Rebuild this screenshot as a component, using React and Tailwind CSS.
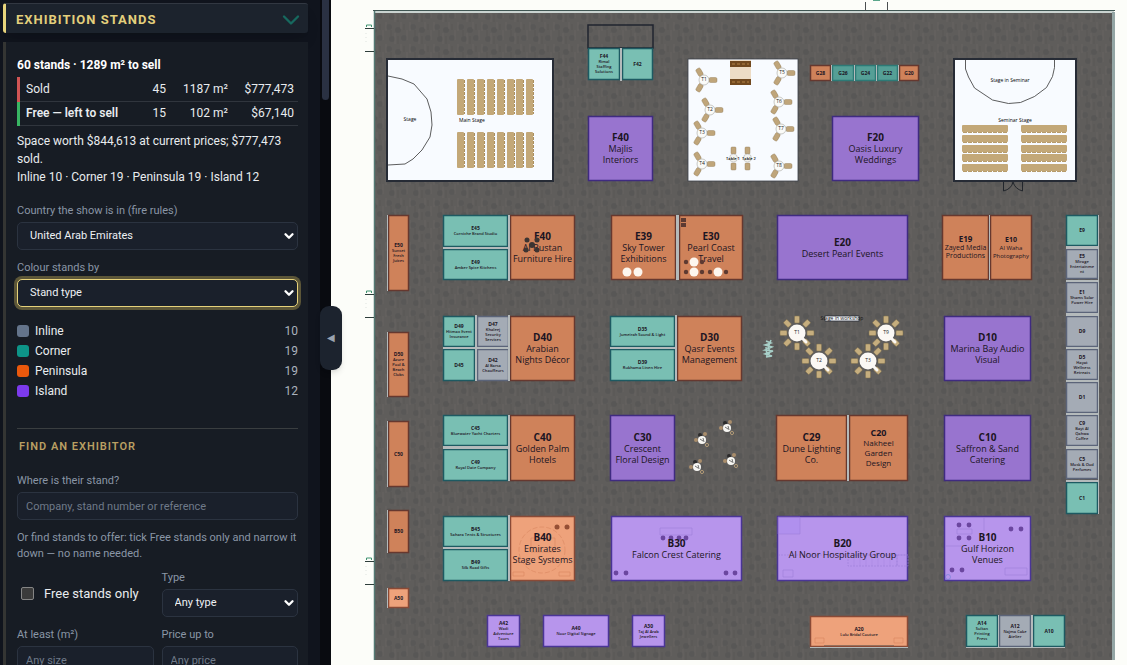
import React, { useState } from 'react';
import { ChevronDown } from 'lucide-react';

const TYPES = [
  { name: 'Inline', count: 10, swatch: 'bg-[#64748b]' },
  { name: 'Corner', count: 19, swatch: 'bg-[#0d9488]' },
  { name: 'Peninsula', count: 19, swatch: 'bg-[#ea580c]' },
  { name: 'Island', count: 12, swatch: 'bg-[#7c3aed]' },
];

// fill and outline of a stand, the "Free" ones are the lighter shades
const PAINT = {
  corner: ['#79bfb3', '#1d5a62'],
  cornerDark: ['#559f96', '#2d7a76'],
  inline: ['#a4abb5', '#5b6479'],
  pen: ['#cf825a', '#66382f'],
  penFree: ['#eea27b', '#8a4a36'],
  island: ['#9874cf', '#3f2b80'],
  islandFree: ['#b795ec', '#4a3596'],
};

// id, paint, x, y, width, height, exhibitor lines, label size
const STANDS = [
  ['F44', 'corner', 588, 48, 32, 32, ['Rimal', 'Staffing', 'Solutions'], 's'],
  ['F42', 'corner', 622, 48, 31, 32, [], 's'],
  ['F40', 'island', 588, 116, 65, 65, ['Majlis', 'Interiors'], 'l'],
  ['F20', 'island', 832, 116, 87, 65, ['Oasis Luxury', 'Weddings'], 'l'],
  ['G28', 'pen', 810, 65, 21, 16, [], 's'],
  ['G26', 'cornerDark', 832, 65, 22, 16, [], 's'],
  ['G24', 'cornerDark', 855, 65, 21, 16, [], 's'],
  ['G22', 'cornerDark', 877, 65, 21, 16, [], 's'],
  ['G20', 'pen', 899, 65, 20, 16, [], 's'],
  ['E50', 'pen', 388, 215, 21, 76, ['Sunset', 'Fresh', 'Juices'], 's'],
  ['D50', 'pen', 388, 332, 21, 65, ['Azure', 'Pool &', 'Beach', 'Clubs'], 's'],
  ['C50', 'pen', 388, 421, 21, 66, [], 's'],
  ['B50', 'pen', 388, 510, 21, 43, [], 's'],
  ['A50', 'penFree', 388, 588, 21, 20, [], 's'],
  ['E45', 'corner', 443, 215, 65, 32, ['Corniche Brand Studio'], 's'],
  ['E49', 'corner', 443, 249, 65, 31, ['Amber Spice Kitchens'], 's'],
  ['E40', 'pen', 510, 215, 65, 65, ['Al Bustan', 'Furniture Hire'], 'l'],
  ['D49', 'corner', 443, 316, 32, 31, ['Hitmax Event', 'Insurance'], 's'],
  ['D45', 'corner', 443, 349, 32, 32, [], 's'],
  ['D47', 'inline', 477, 316, 32, 31, ['Khaleej', 'Security', 'Services'], 's'],
  ['D42', 'inline', 477, 349, 32, 32, ['Al Barsa', 'Chauffeurs'], 's'],
  ['D40', 'pen', 510, 316, 65, 65, ['Arabian', 'Nights Décor'], 'l'],
  ['C45', 'corner', 443, 415, 65, 31, ['Bluewater Yacht Charters'], 's'],
  ['C49', 'corner', 443, 449, 65, 32, ['Royal Date Company'], 's'],
  ['C40', 'pen', 510, 415, 65, 66, ['Golden Palm', 'Hotels'], 'l'],
  ['B45', 'corner', 443, 516, 65, 31, ['Sahara Tents & Structures'], 's'],
  ['B49', 'corner', 443, 549, 65, 32, ['Silk Road Gifts'], 's'],
  ['B40', 'penFree', 510, 516, 65, 65, ['Emirates', 'Stage Systems'], 'l'],
  ['E39', 'pen', 611, 215, 65, 65, ['Sky Tower', 'Exhibitions'], 'l'],
  ['E30', 'pen', 679, 215, 64, 65, ['Pearl Coast', 'Travel'], 'l'],
  ['D35', 'corner', 610, 316, 65, 31, ['Jumeirah Sound & Light'], 's'],
  ['D39', 'corner', 610, 349, 65, 32, ['Rukhama Linen Hire'], 's'],
  ['D30', 'pen', 677, 316, 65, 65, ['Qasr Events', 'Management'], 'l'],
  ['C30', 'island', 610, 415, 65, 66, ['Crescent', 'Floral Design'], 'l'],
  ['B30', 'islandFree', 611, 516, 131, 65, ['Falcon Crest Catering'], 'l'],
  ['E20', 'island', 777, 215, 131, 65, ['Desert Pearl Events'], 'l'],
  ['C29', 'pen', 776, 415, 71, 66, ['Dune Lighting', 'Co.'], 'l'],
  ['C20', 'pen', 849, 415, 59, 66, ['Nakheel', 'Garden', 'Design'], 'ml'],
  ['B20', 'islandFree', 777, 516, 131, 65, ['Al Noor Hospitality Group'], 'l'],
  ['E19', 'pen', 942, 215, 47, 65, ['Zayed Media', 'Productions'], 'm'],
  ['E10', 'pen', 990, 215, 42, 65, ['Al Waha', 'Photography'], 'sm'],
  ['D10', 'island', 944, 316, 87, 65, ['Marina Bay Audio', 'Visual'], 'l'],
  ['C10', 'island', 944, 415, 87, 66, ['Saffron & Sand', 'Catering'], 'l'],
  ['B10', 'islandFree', 944, 516, 87, 65, ['Gulf Horizon', 'Venues'], 'l'],
  ['E9', 'corner', 1066, 215, 32, 31, [], 's'],
  ['E5', 'inline', 1066, 249, 32, 30, ['Mirage', 'Entertainme', 'nt'], 's'],
  ['E1', 'inline', 1066, 282, 32, 31, ['Shams Solar', 'Power Hire'], 's'],
  ['D9', 'inline', 1066, 316, 32, 31, [], 's'],
  ['D5', 'inline', 1066, 349, 32, 31, ['Hayat', 'Wellness', 'Retreats'], 's'],
  ['D1', 'inline', 1066, 382, 32, 31, [], 's'],
  ['C9', 'inline', 1066, 415, 32, 31, ['Bayt Al', 'Qahwa', 'Coffee'], 's'],
  ['C5', 'inline', 1066, 449, 32, 30, ['Musk & Oud', 'Perfumes'], 's'],
  ['C1', 'corner', 1066, 482, 32, 32, [], 's'],
  ['A42', 'islandFree', 487, 615, 33, 32, ['Wadi', 'Adventure', 'Tours'], 's'],
  ['A40', 'islandFree', 543, 615, 66, 32, ['Noor Digital Signage'], 's'],
  ['A30', 'islandFree', 632, 615, 33, 32, ['Taj Al Arab', 'Jewellers'], 's'],
  ['A20', 'penFree', 810, 616, 98, 31, ['Lulu Bridal Couture'], 's'],
  ['A14', 'corner', 966, 615, 32, 32, ['Sultan', 'Printing', 'Press'], 's'],
  ['A12', 'inline', 999, 615, 32, 32, ['Najma Cake', 'Atelier'], 's'],
  ['A10', 'corner', 1033, 615, 32, 32, [], 's'],
];

// id size, line size, line step, line weight
const SIZES = {
  l: [10, 9, 11, 400],
  ml: [9, 8, 10, 400],
  m: [8, 7, 8, 500],
  sm: [7, 6, 8, 500],
  s: [5, 4, 5, 600],
};

// party walls between neighbouring stands
const WALLS = [
  [620, 48, 2, 33], [508, 215, 2, 66], [443, 247, 65, 2], [508, 315, 2, 66],
  [443, 347, 65, 2], [475, 315, 2, 66], [508, 415, 2, 66], [443, 446, 65, 3],
  [508, 515, 2, 66], [443, 547, 65, 2], [676, 215, 3, 65], [675, 315, 2, 66],
  [610, 347, 65, 2], [847, 415, 2, 66], [989, 215, 1, 65], [1098, 215, 1, 299],
  [1066, 246, 32, 3], [1066, 280, 32, 2], [1066, 313, 32, 3], [1066, 347, 32, 2],
  [1066, 380, 32, 2], [1066, 413, 32, 2], [1066, 446, 32, 3], [1066, 480, 32, 2],
  [998, 615, 1, 33], [1031, 615, 2, 33], [966, 647, 99, 1], [810, 647, 98, 1],
  [387, 215, 1, 76], [387, 332, 1, 65], [387, 421, 1, 66], [387, 510, 1, 43],
  [387, 588, 1, 20], [831, 65, 1, 16], [854, 65, 1, 16], [876, 65, 1, 16],
  [898, 65, 1, 16],
];

const STOOLS = [
  [616, 573], [626, 573], [726, 573], [735, 573],
  [663, 538], [671, 538], [679, 538], [686, 538],
  [959, 525], [969, 525], [959, 538], [969, 538],
  [1011, 529], [1021, 529], [952, 570], [962, 570],
];

const StandLabel = ({ stand }) => {
  const [id, , x, y, w, h, lines, size] = stand;
  const [idSize, lineSize, step, weight] = SIZES[size];
  const cx = x + w / 2;
  const top = y + h / 2 - (lines.length * step) / 2 + idSize * 0.36;

  return (
    <text textAnchor="middle" fill="#1c1523">
      <tspan x={cx} y={top} fontSize={idSize} fontWeight="700">
        {id}
      </tspan>
      {lines.map((line, i) => (
        <tspan
          key={line}
          x={cx}
          y={top + step * (i + 1)}
          fontSize={lineSize}
          fontWeight={weight}
        >
          {line}
        </tspan>
      ))}
    </text>
  );
};

const SmallTable = ({ x, y, name }) => (
  <g>
    {[0, 120, 240].map((angle) => (
      <rect
        key={angle}
        x="5"
        y="-2.5"
        width="8"
        height="5"
        rx="1.5"
        fill="#bfa57a"
        stroke="#8d7650"
        strokeWidth="0.4"
        transform={`translate(${x} ${y}) rotate(${angle})`}
      />
    ))}
    <circle cx={x} cy={y} r="5" fill="#fbfbf8" stroke="#a5a5a0" strokeWidth="0.6" />
    <text x={x} y={y + 1} textAnchor="middle" fontSize="5" fill="#222">
      {name}
    </text>
  </g>
);

const RoundTable = ({ x, y, name }) => (
  <g>
    {[0, 45, 90, 135, 180, 225, 270, 315].map((angle) => (
      <rect
        key={angle}
        x="10"
        y="-2.5"
        width="7"
        height="5"
        rx="1"
        fill="#c6ae7e"
        stroke="#80704f"
        strokeWidth="0.5"
        transform={`translate(${x} ${y}) rotate(${angle})`}
      />
    ))}
    <circle cx={x} cy={y} r="8.5" fill="#fbf8f4" />
    <path d={`M${x + 4} ${y + 4}l5 5`} stroke="#fbf8f4" strokeWidth="3" strokeLinecap="round" />
    <text x={x} y={y + 1} textAnchor="middle" fontSize="5" fill="#222">
      {name}
    </text>
  </g>
);

const LoungeTable = ({ x, y }) => (
  <g>
    <circle cx={x + 3} cy={y - 6} r="2" fill="#a98d6b" />
    <circle cx={x - 6} cy={y} r="2" fill="#a98d6b" />
    <circle cx={x + 5} cy={y + 5} r="1.6" fill="none" stroke="#b19a77" />
    <circle cx={x - 2} cy={y - 5} r="2" fill="#2b2a2a" />
    <circle cx={x} cy={y} r="4" fill="#f7f6f2" />
    <path d={`M${x - 2} ${y - 1}l3 2m0-3l1 4`} stroke="#333" strokeWidth="0.7" fill="none" />
  </g>
);

const Entrance = ({ y }) => (
  <g fill="none" stroke="#2d3d3a">
    <path d={`M365 ${y + 0.5}h9M365 ${y + 23.5}h9`} />
    <path d={`M366.5 ${y - 1}v-2h5v2`} stroke="#3f9270" />
    <path d={`M366 ${y + 5}v12`} stroke="#cbd5cf" strokeWidth="0.6" strokeDasharray="1 3" />
  </g>
);

const FloorPlan = () => (
  <svg
    viewBox="331 0 796 665"
    role="img"
    aria-label="Exhibition floor plan"
    className="block h-full w-full"
    fontFamily="'Open Sans', 'Noto Sans', sans-serif"
  >
    <defs>
      <pattern id="carpet" width="24" height="22" patternUnits="userSpaceOnUse">
        <rect width="24" height="22" fill="#5f5d5b" />
        <circle cx="5" cy="5" r="3" fill="#595857" />
        <circle cx="14" cy="8" r="3" fill="#585756" />
        <circle cx="20" cy="16" r="3" fill="#595857" />
        <circle cx="8" cy="17" r="3" fill="#585756" />
        <path d="M2 0v9M11 11v11M17 0v7M23 8v10" stroke="#6a6764" strokeWidth="0.6" />
        <path d="M7 8v6M20 2v6M14 14v8" stroke="#545251" strokeWidth="0.6" />
      </pattern>
    </defs>

    <rect x="374" y="11" width="740" height="649" fill="url(#carpet)" />
    <path d="M374 11.5h740" stroke="#c9d3d0" strokeWidth="3" />
    <path d="M373 10.5h742" stroke="#3f5552" />
    <path d="M374.5 11v649" stroke="#547a74" strokeWidth="1.5" />
    <path d="M1113.5 12v648" stroke="#93a5a4" strokeWidth="3" />
    <path d="M865.5 2v9M887.5 2v9" stroke="#4a4f50" />
    <path d="M873 .5h7" stroke="#5aa68b" />
    <Entrance y={28} />
    <Entrance y={294} />
    <Entrance y={561} />

    {/* main stage */}
    <rect x="387" y="59" width="166" height="122" fill="#f8fbff" stroke="#262b35" strokeWidth="2" />
    <path d="M388 76l14 3 12 5 13 15 4 13 1 13-2 12-8 13-9 9-8 5-17 1" fill="none" stroke="#333" strokeWidth="0.8" />
    <text x="410" y="121" textAnchor="middle" fontSize="5">Stage</text>
    <text x="459" y="122" fontSize="5">Main Stage</text>
    {[79, 132].map((y) =>
      [457, 467, 477, 487, 497, 507, 516, 526].map((x) => (
        <g key={`${x}-${y}`}>
          <rect x={x} y={y} width="7" height="36" rx="1" fill="#c3a878" />
          <path d={`M${x + 7.5} ${y + 1}v34`} stroke="#ab8f5f" strokeDasharray="3 1" />
        </g>
      ))
    )}

    {/* meeting room */}
    <rect x="688" y="59" width="110" height="122" fill="#f8fbff" stroke="#3a3f48" strokeWidth="0.8" />
    <rect x="730" y="60" width="21" height="25" fill="#eddcc5" />
    <path d="M730 64h21M730 82h21" stroke="#71491f" strokeWidth="6" />
    <path d="M732 64h17M732 82h17" stroke="#b48347" strokeDasharray="3 2" />
    <SmallTable x={704} y={80} name="T1" />
    <SmallTable x={710} y={110} name="T2" />
    <SmallTable x={702} y={133} name="T3" />
    <SmallTable x={702} y={164} name="T4" />
    <SmallTable x={782} y={73} name="T5" />
    <SmallTable x={779} y={102} name="T6" />
    <SmallTable x={781} y={129} name="T7" />
    <SmallTable x={779} y={166} name="T8" />
    {[731, 745].map((x) => (
      <g key={x}>
        <rect x={x} y="147" width="5" height="7" rx="1" fill="#bfa57a" stroke="#8d7650" strokeWidth="0.4" />
        <rect x={x} y="163" width="5" height="7" rx="1" fill="#bfa57a" stroke="#8d7650" strokeWidth="0.4" />
        <circle cx={x + 2.5} cy="158" r="4" fill="#f3f3ef" stroke="#aaa" strokeWidth="0.5" />
      </g>
    ))}
    <text x="733" y="160" textAnchor="middle" fontSize="4" fontWeight="600">Table 1</text>
    <text x="749" y="160" textAnchor="middle" fontSize="4" fontWeight="600">Table 2</text>

    {/* seminar room */}
    <rect x="954" y="59" width="122" height="122" fill="#f8fbff" stroke="#262b35" strokeWidth="2" />
    <path d="M965.5 60v9l3 8 6 11 18 12 16 3.5 12-1 14-6 12-9 6-11 2-9v-8" fill="none" stroke="#333" strokeWidth="0.8" />
    <text x="1010" y="82" textAnchor="middle" fontSize="5">Stage in Seminar</text>
    <text x="1015" y="122" textAnchor="middle" fontSize="5">Seminar Stage</text>
    {[962, 1021].map((x) =>
      [125, 135, 145, 154, 164].map((y) => (
        <g key={`${x}-${y}`}>
          <rect x={x} y={y} width="46" height="7" rx="1" fill="#c3a878" />
          <path d={`M${x + 1} ${y + 7.5}h44`} stroke="#b79b6a" strokeDasharray="4 1" />
        </g>
      ))
    )}
    <path d="M1003.5 182v9q8-2 9.5-9 2 7 9.5 9v-9" fill="none" stroke="#22262c" />

    <rect x="588" y="25" width="65" height="23" fill="none" stroke="#20242f" strokeWidth="1.5" />
    {STANDS.map(([id, paint, x, y, w, h]) => (
      <rect
        key={id}
        x={x + 0.5}
        y={y + 0.5}
        width={w - 1}
        height={h - 1}
        fill={PAINT[paint][0]}
        stroke={PAINT[paint][1]}
        strokeWidth="1.5"
      />
    ))}
    {WALLS.map(([x, y, w, h]) => (
      <rect key={`${x}-${y}-${w}`} x={x} y={y} width={w} height={h} fill="#b4babb" />
    ))}

    {/* furniture outlines sit under the labels */}
    <rect x="779" y="518" width="21" height="16" fill="#a98bf0" opacity="0.5" />
    <g fill="none" stroke="#9a7bd6" strokeWidth="0.5">
      <path d="M660 528h32v7h-32zM778 517h22v17h-22zM783 570h10v7h-10z" />
      <path d="M778 555h130M848 555h49v11h-49zM897 555h11v11h-11z" strokeDasharray="2 1" />
      <path d="M854 556v10m6-10v10m6-10v10m6-10v10m6-10v10m6-10v10m6-10v10" opacity="0.5" />
      <path d="M957 529h15v5h-15zM945 546h17M984 517v14M1005 568h22v7h-22z" />
      <circle cx="948" cy="577" r="2.5" stroke="#5f7fd0" />
    </g>
    <g fill="none" stroke="#d8875f" strokeWidth="0.6">
      <circle cx="542" cy="550" r="23" strokeDasharray="5 2" />
      <path d="M513 572h11v4h-11zM559 572h11v4h-11zM531 538h24v14h-24zM815 638h9v5h-9zM894 638h9v5h-9z" />
    </g>
    <path d="M824 645.5h70" stroke="#97705c" />
    <circle cx="557" cy="527" r="2.5" fill="#954f35" />
    <circle cx="567" cy="527" r="2.5" fill="#954f35" />
    {STOOLS.map(([x, y]) => (
      <circle key={`${x}-${y}`} cx={x} cy={y} r="2.4" fill="#6b469f" />
    ))}

    {STANDS.map((stand) => (
      <StandLabel key={stand[0]} stand={stand} />
    ))}

    <g fill="#3c3432">
      <circle cx="527" cy="240" r="2.5" />
      <circle cx="537" cy="240" r="2.5" />
      <circle cx="532" cy="245" r="3" />
      <circle cx="526" cy="250" r="2.5" />
      <circle cx="537" cy="250" r="2.5" />
    </g>
    <g fill="#5d3a32">
      <circle cx="686" cy="262" r="2.2" />
      <circle cx="702" cy="262" r="2.2" />
      <circle cx="686" cy="272" r="2.2" />
      <circle cx="702" cy="272" r="2.2" />
      <circle cx="710" cy="272" r="2.2" />
      <circle cx="726" cy="272" r="2.2" />
      <rect x="681" y="218" width="5" height="4" />
      <rect x="681" y="223" width="5" height="4" />
    </g>
    <g fill="#fdf6ee">
      <circle cx="627" cy="272" r="4.5" />
      <circle cx="638" cy="272" r="4.5" />
      <circle cx="694" cy="262" r="4.5" />
      <circle cx="694" cy="272" r="4.5" />
      <circle cx="718" cy="272" r="4.5" />
    </g>

    {/* workshop area */}
    <RoundTable x={797} y={333} name="T1" />
    <RoundTable x={819} y={361} name="T2" />
    <RoundTable x={868} y={361} name="T3" />
    <RoundTable x={886} y={333} name="T9" />
    <rect x="825" y="316" width="34" height="5" fill="#f8fbff" stroke="#262b35" strokeWidth="0.8" />
    <text x="842" y="320" textAnchor="middle" fontSize="5" fill="#111">
      Stage in workshop
    </text>
    <path
      d="M766 341l5 2-6 2 7 2-7 3 8 1-8 3 7 2-6 1M771 340l-3 8 2 3-2 6M766 347l1 10"
      fill="none"
      stroke="#a7cfc8"
      strokeWidth="1.5"
    />
    <LoungeTable x={727} y={428} />
    <LoungeTable x={702} y={440} />
    <LoungeTable x={731} y={461} />
    <LoungeTable x={697} y={467} />
  </svg>
);

const Field = ({ id, label, children }) => (
  <div className="flex min-w-0 flex-col gap-[3px]">
    <label htmlFor={id} className="text-[11px] leading-4 text-[#8a96a6]">
      {label}
    </label>
    {children}
  </div>
);

const SelectBox = ({ id, options, active }) => (
  <div className="relative">
    <select
      id={id}
      className={`h-7 w-full appearance-none rounded-[5px] border bg-[#1a202b] pl-3 text-[11px] text-[#eef1f4] outline-none ${
        active
          ? 'border-[#e6d27a] ring-[3px] ring-[#5c5638]'
          : 'border-[#2b3340]'
      }`}
    >
      {options.map((option) => (
        <option key={option}>{option}</option>
      ))}
    </select>
    <ChevronDown
      size={14}
      strokeWidth={4}
      className="pointer-events-none absolute top-[7px] right-0.5 text-white"
    />
  </div>
);

const inputStyle =
  'h-7 w-full rounded-[5px] border border-[#2b3340] bg-[#1a202b] px-2 text-[11px] text-white placeholder-[#6f7a89] outline-none';

const Sidebar = () => {
  const [freeOnly, setFreeOnly] = useState(false);

  return (
    <aside className="flex w-[331px] shrink-0 bg-[#10141d] text-[#e9ecef]">
      <div className="flex min-w-0 flex-1 flex-col gap-[9px] overflow-hidden pt-[3px] pr-3 pl-[3px]">
        <button className="flex h-[30px] w-full shrink-0 items-center justify-between rounded-[3px] border-t border-l-[3px] border-t-[#323842] border-l-[#e8d57c] bg-[#1c232d] pt-0.5 pr-[3px] pl-[10px] shadow-lg">
          <span className="text-[13px] font-bold tracking-[1px] text-[#e3cf7c]">
            EXHIBITION STANDS
          </span>
          <ChevronDown size={28} strokeWidth={2} className="text-[#17695f]" />
        </button>

        <div className="flex shrink-0 flex-col border-l-[3px] border-[#343533] bg-[#171c24] pt-[14px] pr-2.5 pb-6 pl-[11px]">
          <h2 className="text-[12px] leading-[18px] font-bold text-white">
            60 stands · 1289 m² to sell
          </h2>
          <table className="mt-[3px] w-full table-fixed text-[12px] leading-4">
            <colgroup>
              <col />
              <col className="w-7" />
              <col className="w-[62px]" />
              <col className="w-[70px]" />
            </colgroup>
            <tbody>
              <tr className="h-6 border-b border-[#30353d]">
                <td className="border-l-[3px] border-l-[#d05454] pl-1.5">Sold</td>
                <td className="text-right">45</td>
                <td className="text-right">1187 m²</td>
                <td className="pr-1 text-right">$777,473</td>
              </tr>
              <tr className="h-6 border-b border-[#30353d]">
                <td className="border-l-[3px] border-l-[#38b563] pl-1.5 font-semibold whitespace-nowrap">
                  Free — left to sell
                </td>
                <td className="text-right">15</td>
                <td className="text-right">102 m²</td>
                <td className="pr-1 text-right">$67,140</td>
              </tr>
            </tbody>
          </table>
          <p className="mt-1.5 text-[12px] leading-[18px]">
            Space worth $844,613 at current prices; $777,473 sold.
            <br />
            Inline 10 · Corner 19 · Peninsula 19 · Island 12
          </p>

          <div className="mt-[17px] flex flex-col gap-[10px]">
            <Field id="country" label="Country the show is in (fire rules)">
              <SelectBox id="country" options={['United Arab Emirates']} />
            </Field>
            <Field id="colour" label="Colour stands by">
              <SelectBox id="colour" options={['Stand type', 'Status']} active />
            </Field>
          </div>

          <ul className="mt-[14px] text-[12px] leading-5">
            {TYPES.map((type) => (
              <li key={type.name} className="flex items-center gap-1.5">
                <span className={`size-3 rounded-[3px] ${type.swatch}`} />
                <span className="flex-1">{type.name}</span>
                <span className="text-[#aab2bd]">{type.count}</span>
              </li>
            ))}
          </ul>

          <section className="mt-[27px] border-t border-[#3a3e40] pt-2">
            <h3 className="mb-4 pl-0.5 text-[11px] leading-5 font-semibold tracking-[1px] text-[#b99f62]">
              FIND AN EXHIBITOR
            </h3>
            <Field id="company" label="Where is their stand?">
              <input
                id="company"
                type="text"
                placeholder="Company, stand number or reference"
                className={inputStyle}
              />
            </Field>
            <p className="mt-2.5 text-[11px] leading-4 text-[#8a96a6]">
              Or find stands to offer: tick Free stands only and narrow it down — no name needed.
            </p>
            <div className="mt-2 grid grid-cols-2 gap-x-2 gap-y-[10px]">
              <label className="flex items-center gap-2.5 pl-1 text-[13px]">
                <input
                  type="checkbox"
                  checked={freeOnly}
                  onChange={(e) => setFreeOnly(e.target.checked)}
                  className="size-[13px] appearance-none rounded-[2px] border border-[#858585] bg-[#3b3b3b] checked:bg-[#e6d27a]"
                />
                Free stands only
              </label>
              <Field id="type" label="Type">
                <SelectBox
                  id="type"
                  options={['Any type', 'Inline', 'Corner', 'Peninsula', 'Island']}
                />
              </Field>
              <Field id="size" label="At least (m²)">
                <input id="size" type="text" placeholder="Any size" className={inputStyle} />
              </Field>
              <Field id="price" label="Price up to">
                <input id="price" type="text" placeholder="Any price" className={inputStyle} />
              </Field>
            </div>
          </section>
        </div>
      </div>
      <div className="w-[11px] shrink-0 bg-[#090b10] px-0.5">
        <div className="h-[15vh] rounded-b-full bg-[#2a3142]" />
      </div>
    </aside>
  );
};

const App = () => {
  return (
    <div className="relative flex h-screen overflow-hidden bg-[#fcfdf9] font-[Roboto,'Open_Sans',sans-serif]">
      <Sidebar />
      <main className="min-w-0 flex-1">
        <FloorPlan />
      </main>
      <button
        aria-label="Hide panel"
        className="absolute top-[46vh] left-[320px] flex h-16 w-[22px] items-center justify-center rounded-[9px] bg-[#1c232e] text-[10px] text-[#9aa3af] shadow-md"
      >
        ◀
      </button>
    </div>
  );
};

export default App;
